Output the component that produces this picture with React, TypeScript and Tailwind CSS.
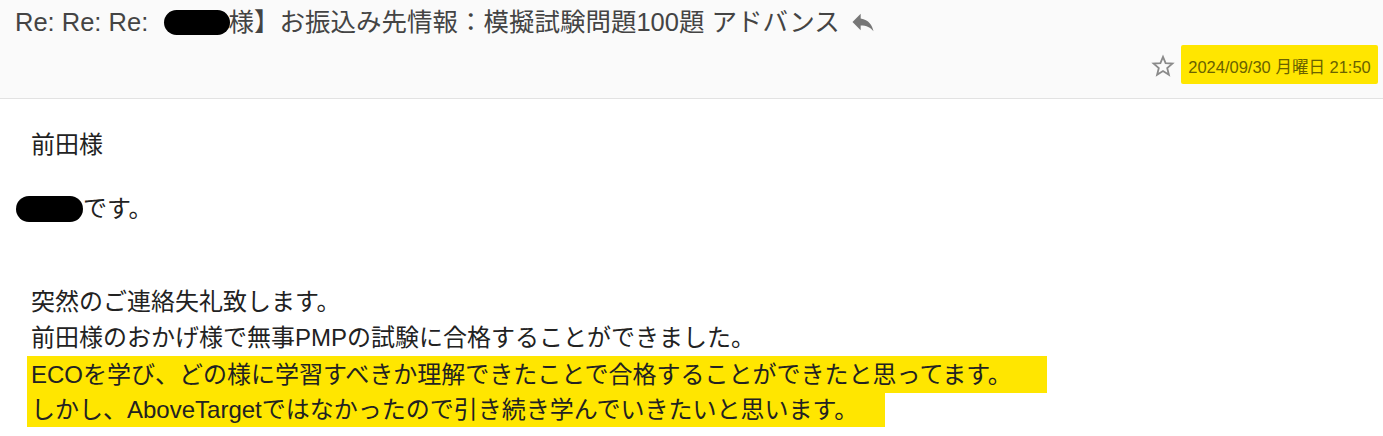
import React from "react";

const font = { fontFamily: '"Liberation Sans", "Noto Sans CJK JP", sans-serif' };

export default function App() {
  return (
    <div className="w-[1383px] h-[436px] bg-white overflow-hidden text-[#222]" style={font}>
      <div className="h-[99px] bg-[#fafafa] border-b border-[#e2e2e2] flex flex-col">
        <div className="flex items-center pl-[15px] pt-[6px] h-[38px] text-[25.5px] leading-[32px] text-[#444] whitespace-nowrap">
          <span>Re: Re: Re:&nbsp;&nbsp;</span>
          <span className="inline-block w-[66px] h-[25px] rounded-full bg-black ml-[2px] -mr-[2px]"></span>
          <span>様】お振込み先情報：模擬試験問題100題 アドバンス</span>
          <svg className="ml-[9px]" width="28" height="28" viewBox="0 0 24 24" fill="#777">
            <path d="M10 9V5l-7 7 7 7v-4.1c5 0 8.5 1.6 11 5.1-1-5-4-10-11-11z" />
          </svg>
        </div>
        <div className="flex justify-end items-center pr-[5px] mt-[7px]">
          <svg width="24" height="24" viewBox="0 0 24 24" className="mr-[6px] mt-[2px]">
            <polygon
              points="12,2.8 14.6,9.2 21.4,9.6 16.2,14 17.9,20.8 12,17.1 6.1,20.8 7.8,14 2.6,9.6 9.4,9.2"
              fill="none"
              stroke="#8a8a8a"
              strokeWidth="1.8"
              strokeLinejoin="miter"
            />
          </svg>
          <div className="bg-[#ffe600] h-[39px] w-[197px] flex items-center justify-center text-[16.5px] text-[#6a6200] rounded-[2px] pt-[6px]">
            2024/09/30 月曜日 21:50
          </div>
        </div>
      </div>
      <div className="pl-[31px] pt-[28px] text-[24px] leading-[36px] whitespace-nowrap">
        <div>前田様</div>
        <div className="mt-[28px] flex items-center">
          <span className="inline-block w-[67px] h-[26px] rounded-full bg-black -ml-[15px] mr-[0px]"></span>
          <span>です。</span>
        </div>
        <div className="mt-[57px]">突然のご連絡失礼致します。</div>
        <div>前田様のおかげ様で無事PMPの試験に合格することができました。</div>
        <div className="-ml-[4px]">
          <div className="w-[1020px] h-[37px] bg-[#ffe600] pl-[4px] leading-[38px]">
            ECOを学び、どの様に学習すべきか理解できたことで合格することができたと思ってます。
          </div>
          <div className="w-[858px] h-[34px] bg-[#ffe600] pl-[4px] leading-[34px]">
            しかし、AboveTargetではなかったので引き続き学んでいきたいと思います。
          </div>
        </div>
      </div>
    </div>
  );
}
